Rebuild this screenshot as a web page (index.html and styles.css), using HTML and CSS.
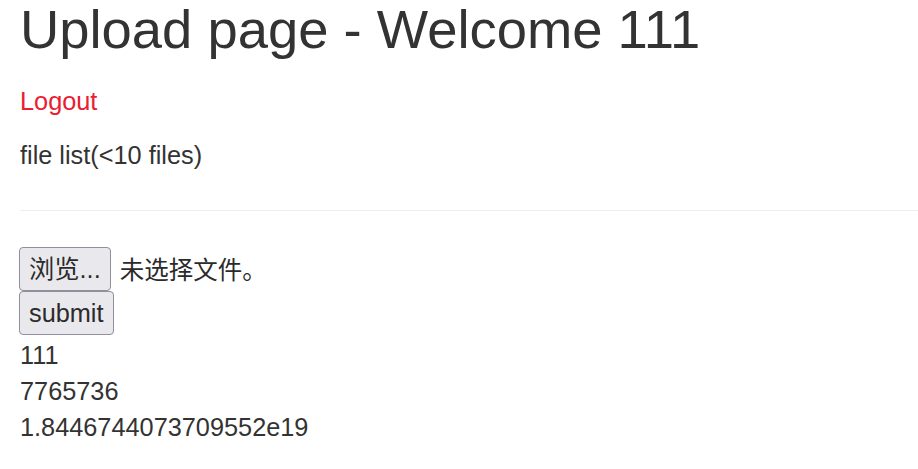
FILE: index.html
```html
<!DOCTYPE html>
<html>
<head>
<meta charset="utf-8">
<title>Upload page</title>
<link rel="stylesheet" href="styles.css">
</head>
<body>
<div class="page">
  <h1 class="title">Upload page - Welcome 111</h1>
  <a class="logout" href="#">Logout</a>
  <p class="list-label">file list(&lt;10 files)</p>
  <hr class="divider">
  <form class="upload-form">
    <div class="file-row">
      <span class="btn">浏览...</span>
      <span class="file-status">未选择文件。</span>
    </div>
    <div class="submit-row"><span class="btn">submit</span></div>
  </form>
  <div class="lines">
    <div class="line">111</div>
    <div class="line">7765736</div>
    <div class="line">1.8446744073709552e19</div>
  </div>
</div>
</body>
</html>
```

FILE: styles.css
```css
html, body {
  margin: 0;
  padding: 0;
  background: #fff;
}
body {
  font-family: "Liberation Sans", Arial, "Noto Sans CJK SC", sans-serif;
  color: #333;
  font-size: 25.3px;
  overflow: hidden;
}
.page {
  padding-left: 20px;
}
.title {
  margin: 0;
  font-size: 54.4px;
  font-weight: 400;
  line-height: 1.1;
  color: #333;
}
.logout {
  display: inline-block;
  margin-top: 24px;
  color: #e8202f;
  text-decoration: none;
  line-height: 34px;
}
.list-label {
  margin: 20px 0 0;
  line-height: 34px;
}
.divider {
  margin: 38px 0 0;
  border: 0;
  border-top: 1px solid #eee;
}
.upload-form {
  margin-top: 36px;
}
.file-row {
  display: flex;
  align-items: center;
  gap: 9px;
}
.submit-row {
  display: flex;
}
.btn {
  display: inline-block;
  box-sizing: border-box;
  padding: 0 9px;
  height: 44px;
  line-height: 42px;
  margin-left: -1px;
  background: #e9e9ed;
  border: 1px solid #8f8f9d;
  border-radius: 4px;
  color: #2b2b2b;
}
.file-status {
  font-family: "Noto Sans CJK SC", sans-serif;
  font-size: 24.5px;
  color: #2b2b2b;
}
.lines {
  padding-top: 2px;
}
.line {
  line-height: 36px;
}
```
